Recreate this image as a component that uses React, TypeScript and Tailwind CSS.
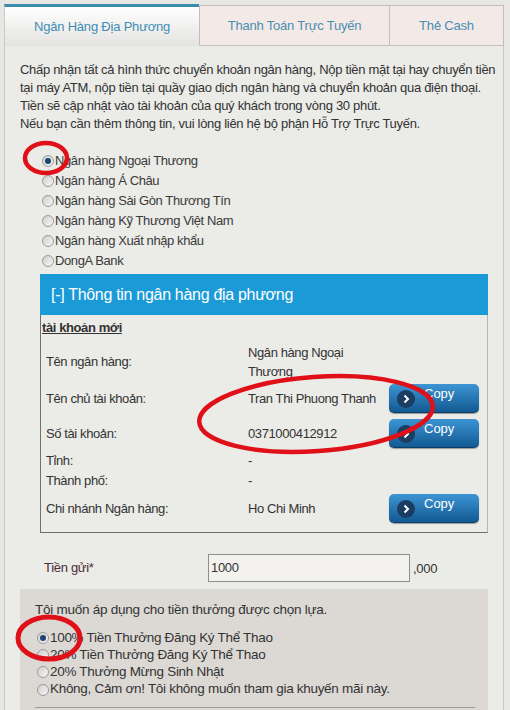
import React from 'react';

const banks = [
  'Ngân hàng Ngoại Thương',
  'Ngân hàng Á Châu',
  'Ngân hàng Sài Gòn Thương Tín',
  'Ngân hàng Kỹ Thương Việt Nam',
  'Ngân hàng Xuất nhập khẩu',
  'DongA Bank',
];

const bonuses = [
  '100% Tiền Thưởng Đăng Ký Thể Thao',
  '20% Tiền Thưởng Đăng Ký Thể Thao',
  '20% Thưởng Mừng Sinh Nhật',
  'Không, Cảm ơn! Tôi không muốn tham gia khuyến mãi này.',
];

function Radio({ checked = false }: { checked?: boolean }) {
  return (
    <span className="flex h-[12px] w-[12px] shrink-0 items-center justify-center rounded-full border border-[#9a9a9a] bg-gradient-to-br from-[#cfcfcf] to-[#f7f7f7]">
      {checked && <span className="h-[6px] w-[6px] rounded-full bg-[#1c4670]" />}
    </span>
  );
}

function CopyButton() {
  return (
    <button
      type="button"
      className="flex h-[29px] w-[90px] items-start rounded-[5px] border-b border-[#0b3d66] bg-gradient-to-b from-[#3d95d4] to-[#115a93] pl-[8px] shadow-[0_1px_1px_rgba(0,0,0,0.35)]"
    >
      <span className="mt-[6px] flex h-[18px] w-[18px] items-center justify-center rounded-full bg-[#1b3d62]">
        <svg width="10" height="10" viewBox="0 0 10 10">
          <path d="M3.5 1.5 L7 5 L3.5 8.5" fill="none" stroke="#ffffff" strokeWidth="2" />
        </svg>
      </span>
      <span className="ml-[9px] mt-[2px] text-[13px] leading-[16px] tracking-normal text-white">Copy</span>
    </button>
  );
}

export default function App() {
  return (
    <div className="relative h-[710px] w-[510px] overflow-hidden bg-[#e7e7e4] font-['Liberation_Sans',Arial,sans-serif] text-[#333]">
      <div className="ml-[4px] w-[500px] pt-[4px]">
        {/* Tabs */}
        <div className="flex h-[42px] text-[13px] tracking-[-0.2px]">
          <div className="flex w-[195px] items-center justify-center border-l border-t-[3px] border-l-[#c9c9c6] border-t-[#3a8cad] bg-gradient-to-b from-white to-[#e4e3e1] text-[#3f8db6]">
            Ngân Hàng Địa Phương
          </div>
          <div className="mt-[1px] flex w-[191px] items-center justify-center border border-[#c6bebc] bg-[#f3e9e7] text-[#4a8db0]">
            Thanh Toán Trực Tuyến
          </div>
          <div className="mt-[1px] flex flex-1 items-center justify-center border border-l-0 border-[#c6bebc] bg-[#f3e9e7] text-[#4a8db0]">
            Thẻ Cash
          </div>
        </div>

        {/* Content */}
        <div className="h-[664px] border-x border-[#c9c9c6] bg-[#ebebe8] px-[15px] pt-[15px]">
          <p className="whitespace-nowrap text-[13px] leading-[18px] tracking-[-0.3px]">
            Chấp nhận tất cả hình thức chuyển khoản ngân hàng, Nộp tiền mặt tại hay chuyển tiền
            <br />
            tại máy ATM, nộp tiền tại quầy giao dịch ngân hàng và chuyển khoản qua điện thoại.
            <br />
            Tiền sẽ cập nhật vào tài khoản của quý khách trong vòng 30 phút.
            <br />
            Nếu bạn cần thêm thông tin, vui lòng liên hệ bộ phận Hỗ Trợ Trực Tuyến.
          </p>

          <div className="ml-[22px] mt-[18px]">
            {banks.map((bank, i) => (
              <div
                key={bank}
                className="flex h-[20px] items-center gap-[1px] text-[13px] tracking-[-0.4px] text-[#3a3a3a]"
              >
                <Radio checked={i === 0} />
                <span>{bank}</span>
              </div>
            ))}
          </div>

          {/* Bank info panel */}
          <div className="ml-[20px] mt-[3px] w-[448px]">
            <div className="flex h-[41px] items-center bg-[#1b9ad8] pl-[11px] text-[16px] tracking-[-0.3px] text-white">
              [-] Thông tin ngân hàng địa phương
            </div>
            <div className="border-b border-l border-r border-b-[#6f6f6f] border-l-[#6f6f6f] border-r-[#b5b5b2] pb-[6px] pt-[4px] text-[13px] tracking-[-0.4px] text-[#333]">
              <div className="flex h-[18px] items-center pl-[1px] font-bold underline">tài khoản mới</div>
              <div className="mt-[6px] flex h-[38px] items-center pl-[5px]">
                <span className="w-[202px]">Tên ngân hàng:</span>
                <span className="leading-[19px]">
                  Ngân hàng Ngoại
                  <br />
                  Thương
                </span>
              </div>
              <div className="flex h-[35px] items-center pl-[5px]">
                <span className="w-[202px]">Tên chủ tài khoản:</span>
                <span className="w-[141px]">Tran Thi Phuong Thanh</span>
                <CopyButton />
              </div>
              <div className="flex h-[35px] items-center pl-[5px]">
                <span className="w-[202px]">Số tài khoản:</span>
                <span className="w-[141px]">0371000412912</span>
                <CopyButton />
              </div>
              <div className="flex h-[20px] items-center pl-[5px]">
                <span className="w-[202px]">Tỉnh:</span>
                <span>-</span>
              </div>
              <div className="flex h-[20px] items-center pl-[5px]">
                <span className="w-[202px]">Thành phố:</span>
                <span>-</span>
              </div>
              <div className="flex h-[35px] items-center pl-[5px]">
                <span className="w-[202px]">Chi nhánh Ngân hàng:</span>
                <span className="w-[141px]">Ho Chi Minh</span>
                <CopyButton />
              </div>
            </div>
          </div>

          {/* Deposit */}
          <div className="ml-[24px] mt-[21px] flex h-[28px] items-center text-[13px] tracking-[-0.3px]">
            <span className="w-[164px] text-[#4d2c36]">Tiền gửi*</span>
            <div className="flex h-[28px] w-[202px] items-center border border-[#8e8e8e] bg-[#f3f2ef] pl-[2px] text-[#333]">
              1000
            </div>
            <span className="ml-[3px] mt-[2px] text-[#333]">,000</span>
          </div>

          {/* Bonus */}
          <div className="mt-[7px] w-[468px] bg-[#dcd9d5] pl-[15px] pt-[11px] text-[13.5px] text-[#333]">
            <div className="flex h-[20px] items-center tracking-[-0.25px]">
              Tôi muốn áp dụng cho tiền thưởng được chọn lựa.
            </div>
            <div className="ml-[2px] mt-[9px] tracking-[-0.3px]">
              {bonuses.map((b, i) => (
                <div key={b} className="flex h-[17.3px] items-center gap-[1px] whitespace-nowrap">
                  <Radio checked={i === 0} />
                  <span>{b}</span>
                </div>
              ))}
            </div>
            <div className="mr-[13px] mt-[9px] border-t border-[#9c9c9a] pb-[20px]" />
          </div>
        </div>
      </div>

      {/* Hand-drawn annotations */}
      <svg className="pointer-events-none absolute left-0 top-0" width="510" height="710">
        <ellipse cx="46" cy="158" rx="21" ry="15" fill="none" stroke="#e01018" strokeWidth="4.5" />
        <ellipse
          cx="316"
          cy="414"
          rx="117"
          ry="37"
          fill="none"
          stroke="#e01018"
          strokeWidth="4.5"
          transform="rotate(-4 316 414)"
        />
        <ellipse cx="49" cy="638" rx="31" ry="21" fill="none" stroke="#e01018" strokeWidth="5" />
      </svg>
    </div>
  );
}
